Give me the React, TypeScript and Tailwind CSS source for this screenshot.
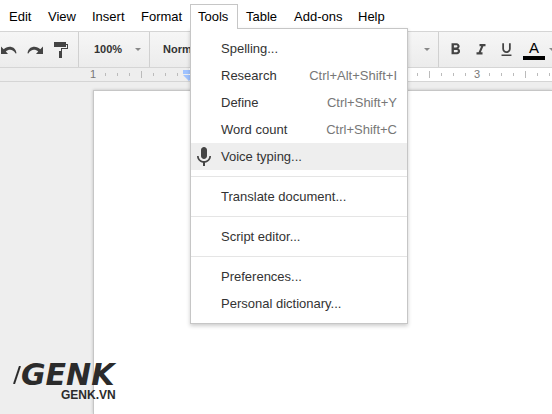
import type { ReactNode } from "react";
import { MdFormatBold, MdFormatItalic, MdFormatUnderlined, MdMic } from "react-icons/md";

type Entry = { label: string; keys?: string; icon?: ReactNode; active?: boolean };
type Menu = { label: string; width: string };

const menusBefore: Menu[] = [
  { label: "Edit", width: "w-[39px]" },
  { label: "View", width: "w-[44px]" },
  { label: "Insert", width: "w-[49px]" },
  { label: "Format", width: "w-[57px]" },
];
const menusAfter: Menu[] = [
  { label: "Table", width: "w-[48px]" },
  { label: "Add-ons", width: "w-[64px]" },
  { label: "Help", width: "w-[44px]" },
];

const toolGroups: Entry[][] = [
  [
    { label: "Spelling..." },
    { label: "Research", keys: "Ctrl+Alt+Shift+I" },
    { label: "Define", keys: "Ctrl+Shift+Y" },
    { label: "Word count", keys: "Ctrl+Shift+C" },
    { label: "Voice typing...", icon: <MdMic size={24} />, active: true },
  ],
  [{ label: "Translate document..." }],
  [{ label: "Script editor..." }],
  [{ label: "Preferences..." }, { label: "Personal dictionary..." }],
];

function Caret() {
  return (
    <svg className="pointer-events-none h-[3px] w-[6px] shrink-0" viewBox="0 0 6 3" fill="#888" aria-hidden="true">
      <path d="M0 0h6L3 3z" />
    </svg>
  );
}

function MenuButton({ label, width }: Menu) {
  return (
    <button className={`h-[25px] shrink-0 border border-transparent pl-[7px] text-left leading-[22px] text-black ${width}`}>
      {label}
    </button>
  );
}

function ToolsMenu() {
  return (
    <div
      role="menu"
      className="absolute top-6 left-0 z-10 w-[218px] border border-[#c6c6c6] bg-white py-[6px] shadow-[0_2px_4px_rgba(0,0,0,0.2)]"
    >
      {toolGroups.map((group, i) => (
        <div key={i} className={i > 0 ? "mt-[6px] border-t border-[#e5e5e5] pt-[6px]" : ""}>
          {group.map((item) => (
            <button
              key={item.label}
              role="menuitem"
              className={`flex h-[27px] w-full items-center pr-[10px] text-left text-[#333] ${item.active ? "bg-[#eee]" : ""}`}
            >
              <span className="flex w-[30px] shrink-0 justify-center pr-1 text-[#444]">{item.icon}</span>
              <span className="flex-1">{item.label}</span>
              {item.keys && <span className="text-[#777]">{item.keys}</span>}
            </button>
          ))}
        </div>
      ))}
    </div>
  );
}

function MenuBar() {
  return (
    <nav className="flex h-[31px] items-start bg-white pt-1 pl-px whitespace-nowrap">
      {menusBefore.map((m) => (
        <MenuButton key={m.label} {...m} />
      ))}
      <div className="relative shrink-0">
        <button
          aria-expanded="true"
          className="relative z-20 h-[25px] w-[48px] border border-b-0 border-[#c6c6c6] bg-white pl-[7px] text-left leading-[22px] text-black"
        >
          Tools
        </button>
        <ToolsMenu />
      </div>
      {menusAfter.map((m) => (
        <MenuButton key={m.label} {...m} />
      ))}
    </nav>
  );
}

function Toolbar() {
  return (
    <div className="flex h-[37px] items-stretch overflow-hidden border-y border-[#d5d5d5] bg-linear-to-b from-[#f6f6f6] to-[#ececec] text-[11px] font-bold text-[#333]">
      <div className="flex w-[79px] shrink-0 items-center gap-[10px] border-r border-[#d0d0d0] pl-px text-[#444]">
        <button aria-label="Undo">
          <svg className="h-4 w-4" viewBox="0 0 16 16" fill="currentColor">
            <path d="M0 4.500v7.500h7L4.800 9.600C7.500 7 12 6.800 14.600 11.500l.9-.3C14.500 3.500 6.500 3.200 2.700 7.200z" />
          </svg>
        </button>
        <button aria-label="Redo">
          <svg className="h-4 w-4" viewBox="0 0 16 16" fill="currentColor">
            <path d="M16 4.500v7.500H9l2.200-2.400C8.500 7 4 6.800 1.400 11.500l-.9-.3C1.500 3.500 9.500 3.200 13.300 7.200z" />
          </svg>
        </button>
        <button aria-label="Paint format">
          <svg className="h-4 w-4" viewBox="0 0 16 16" fill="currentColor">
            <path d="M1 0h12v5H1zM13 2h2v5H9v2h-1V6h6V3h-1zM6 9h3v7H6z" />
          </svg>
        </button>
      </div>
      <label className="relative flex w-[71px] shrink-0 items-center border-r border-[#d0d0d0]">
        <select aria-label="Zoom" className="h-full w-full appearance-none bg-transparent pl-[15px]">
          <option>100%</option>
        </select>
        <span className="pointer-events-none absolute right-2"><Caret /></span>
      </label>
      <label className="relative flex w-[289px] shrink-0 items-center border-r border-[#d0d0d0]">
        <select aria-label="Styles" className="h-full w-full appearance-none bg-transparent pl-[13px]">
          <option>Normal text</option>
        </select>
        <span className="pointer-events-none absolute right-2"><Caret /></span>
      </label>
      <div className="flex shrink-0 items-center pl-[7px] text-[#444]">
        <button aria-label="Bold" className="flex w-[26px] justify-start"><MdFormatBold size={19} /></button>
        <button aria-label="Italic" className="flex w-[26px] justify-start"><MdFormatItalic size={18} /></button>
        <button aria-label="Underline" className="flex w-[25px] justify-start"><MdFormatUnderlined size={17} /></button>
        <button aria-label="Text color" className="flex items-center gap-1 text-black">
          <span className="w-[22px] border-b-4 border-black text-center text-[15px] leading-[16px] font-normal">A</span>
          <Caret />
        </button>
      </div>
    </div>
  );
}

const ticks = Array.from({ length: 70 }, (_, i) => i);

function Ruler() {
  return (
    <div className="flex h-[14px] items-center overflow-hidden border-b border-[#d5d5d5] bg-linear-to-r from-[#eee] from-[189px] to-white to-[189px] pl-[87px] text-[11px] text-[#777]">
      {ticks.map((i) => (
        <div key={i} className="flex w-3 shrink-0 justify-center">
          {i === 8 ? (
            <svg className="h-[13px] w-3 shrink-0" viewBox="0 0 12 13" fill="#a0c3ff" aria-label="Left indent">
              <path d="M0 2h12v4H0zM0 7h12l-6 6z" />
            </svg>
          ) : i % 8 === 0 ? (
            <span className="leading-[13px]">{Math.abs(i / 8 - 1)}</span>
          ) : (
            <span className={i % 4 === 0 ? "h-[7px] w-px bg-[#bbb]" : "h-[3px] w-px bg-[#bbb]"} />
          )}
        </div>
      ))}
    </div>
  );
}

function Watermark() {
  return (
    <div className="absolute bottom-[12px] left-[13px] text-[#2b2b2b]">
      <div className="flex items-center">
        <svg className="h-[18px] w-[8px]" viewBox="0 0 8 18" stroke="currentColor" strokeWidth="2" aria-hidden="true">
          <path d="M1 18L7 0" />
        </svg>
        <span className="font-['DejaVu_Sans',sans-serif] text-[30px] leading-[26px] font-bold italic">GENK</span>
      </div>
      <div className="pl-12 text-[12px] leading-[14px] font-bold">GENK.VN</div>
    </div>
  );
}

export default function App() {
  return (
    <div className="relative flex min-h-screen flex-col overflow-hidden bg-[#eee] font-['Liberation_Sans',Arial,sans-serif] text-[13px]">
      <MenuBar />
      <Toolbar />
      <Ruler />
      <main className="flex grow pt-2 pl-[93px]">
        <div className="grow border-t border-l border-[#c6c6c6] bg-white shadow-[0_0_3px_rgba(0,0,0,0.2)]" />
      </main>
      <Watermark />
    </div>
  );
}
